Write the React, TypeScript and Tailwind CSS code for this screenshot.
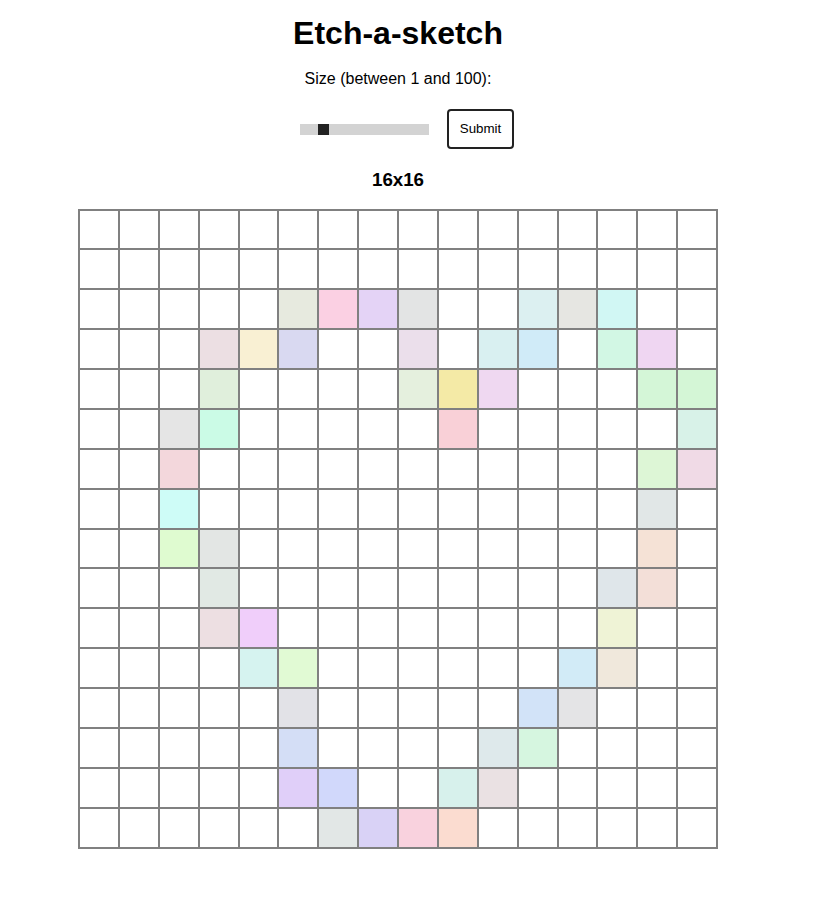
import { useState } from "react";

const SIZE = 16;

// cells already coloured in the reference, [row, col, colour]
const painted: [number, number, string][] = [
  [2, 5, "#e7eadf"], [2, 6, "#fbd0e3"], [2, 7, "#e4d3f6"], [2, 8, "#e3e4e4"],
  [2, 11, "#dcf0f1"], [2, 12, "#e6e6e2"], [2, 13, "#d1f7f4"],
  [3, 3, "#ecdfe3"], [3, 4, "#f9f0d3"], [3, 5, "#d9d9f1"], [3, 8, "#ebdfeb"],
  [3, 10, "#d9f0f1"], [3, 11, "#d0ebf8"], [3, 13, "#d2f7e4"], [3, 14, "#efd6f2"],
  [4, 3, "#e0efdc"], [4, 8, "#e5f0de"], [4, 9, "#f4eaa6"], [4, 10, "#efd8f1"],
  [4, 14, "#d4f6d7"], [4, 15, "#d4f6d6"],
  [5, 2, "#e5e5e5"], [5, 3, "#cbfbe6"], [5, 9, "#f9d0d7"], [5, 15, "#d8f2e8"],
  [6, 2, "#f3d7dc"], [6, 14, "#ddf6d6"], [6, 15, "#f0dae6"],
  [7, 2, "#cefcf7"], [7, 14, "#e1e7e7"],
  [8, 2, "#dffbd0"], [8, 3, "#e3e6e4"], [8, 14, "#f5e2d6"],
  [9, 3, "#e1e9e4"], [9, 13, "#dfe6ea"], [9, 14, "#f3dfd8"],
  [10, 3, "#eddfe2"], [10, 4, "#f0cefa"], [10, 13, "#eff3d6"],
  [11, 4, "#d6f3f0"], [11, 5, "#e1fad4"], [11, 12, "#d2ebf7"], [11, 13, "#f0e8dc"],
  [12, 5, "#e2e2e7"], [12, 11, "#d2e3f8"], [12, 12, "#e4e4e6"],
  [13, 5, "#d4def6"], [13, 10, "#dee9eb"], [13, 11, "#d6f6e0"],
  [14, 5, "#e0cff9"], [14, 6, "#d1d8fb"], [14, 9, "#d7f1ec"], [14, 10, "#eae1e3"],
  [15, 6, "#e2e7e6"], [15, 7, "#d9d2f6"], [15, 8, "#f9d2de"], [15, 9, "#fbdcd0"],
];

function initialColours(): Record<string, string> {
  const map: Record<string, string> = {};
  painted.forEach(([r, c, col]) => {
    map[`${r}-${c}`] = col;
  });
  return map;
}

function randomPastel() {
  const h = Math.floor(Math.random() * 360);
  return `hsl(${h}, 70%, 90%)`;
}

export default function App() {
  const [sliderValue, setSliderValue] = useState(16);
  const [size, setSize] = useState(SIZE);
  const [colours, setColours] = useState<Record<string, string>>(initialColours);

  // board is 640px including a 1px frame
  const cellPx = 638 / size;
  const cells = Array.from({ length: size * size }, (_, i) => i);

  return (
    <div className="min-h-screen bg-white font-['Liberation_Sans',Arial,sans-serif] text-black">
      <div className="flex w-[796px] flex-col items-center">
        <h1 className="mt-[15px] text-[32px] font-bold leading-[37px]">
          Etch-a-sketch
        </h1>
        <p className="mt-[18px] text-[16px] leading-[18px]">
          Size (between 1 and 100):
        </p>

        <div className="mt-[21px] flex items-center gap-[18px] pl-[18px]">
          <input
            type="range"
            min={1}
            max={100}
            value={sliderValue}
            onChange={(e) => setSliderValue(Number(e.target.value))}
            className="h-[11px] w-[129px] cursor-pointer appearance-none bg-[#d3d3d3] outline-none [&::-webkit-slider-thumb]:h-[11px] [&::-webkit-slider-thumb]:w-[11px] [&::-webkit-slider-thumb]:appearance-none [&::-webkit-slider-thumb]:bg-[#222]"
          />
          <button
            onClick={() => {
              setSize(sliderValue);
              setColours({});
            }}
            className="h-[40px] w-[67px] rounded-[4px] border-2 border-[#222] bg-white text-[13.33px]"
          >
            Submit
          </button>
        </div>

        <h3 className="mt-[20px] text-[18.72px] font-bold leading-[21.5px]">
          {size}x{size}
        </h3>

        <div className="mt-[18px] w-[640px] border border-[#808080]">
          <div
            className="grid"
            style={{ gridTemplateColumns: `repeat(${size}, ${cellPx}px)` }}
          >
            {cells.map((i) => {
              const key = `${Math.floor(i / size)}-${i % size}`;
              return (
                <div
                  key={key}
                  onMouseEnter={() =>
                    setColours((prev) =>
                      prev[key] ? prev : { ...prev, [key]: randomPastel() },
                    )
                  }
                  className="border border-[#808080]"
                  style={{
                    height: cellPx,
                    backgroundColor: colours[key] ?? "#ffffff",
                  }}
                />
              );
            })}
          </div>
        </div>
      </div>
    </div>
  );
}
